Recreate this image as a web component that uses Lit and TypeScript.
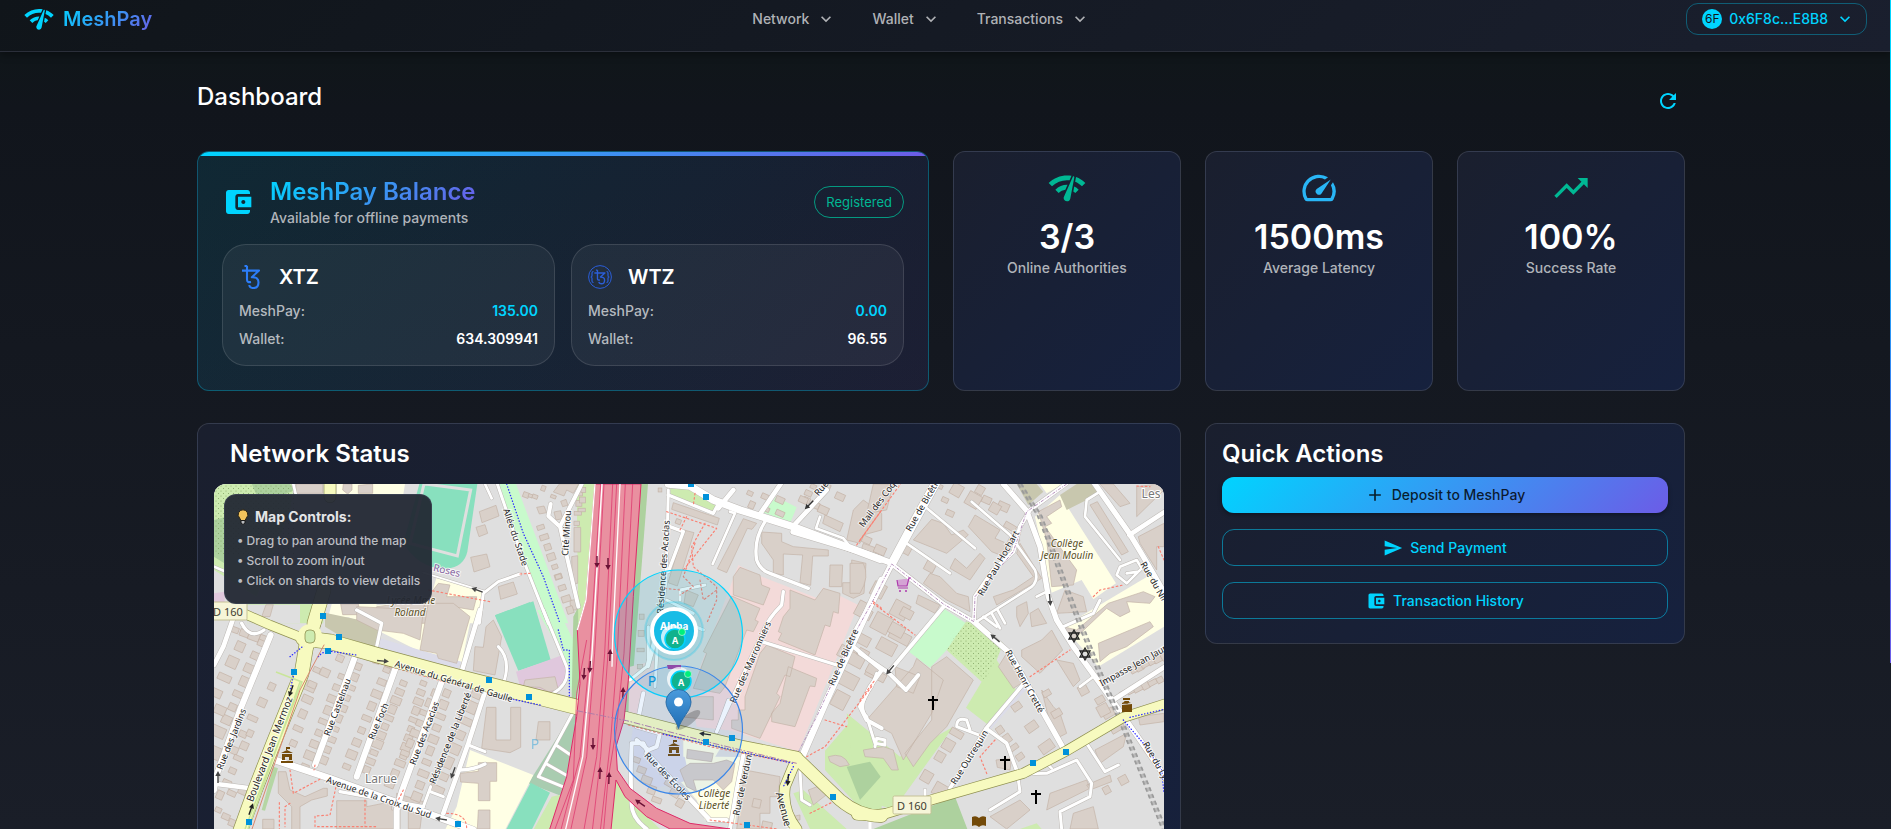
import { LitElement, html, svg, css, nothing } from "lit";
import { customElement } from "lit/decorators.js";

/* ---------- icons (24 x 24 grid) ---------- */

const ICONS = {
  network:
    "M15.9 5c-.17 0-.32.09-.41.23l-.07.15-5.18 11.65c-.16.29-.26.61-.26.96 0 1.11.9 2.01 2.01 2.01.96 0 1.77-.68 1.96-1.59l.01-.03L16.4 5.5c0-.28-.22-.5-.5-.5zM1 9l2 2c2.88-2.88 6.79-4.08 10.53-3.62l1.19-2.68C9.89 3.84 4.74 5.27 1 9zm20 2 2-2c-1.64-1.64-3.55-2.82-5.59-3.57l-.53 2.82c1.5.62 2.9 1.53 4.12 2.75zm-4 4 2-2c-.8-.8-1.7-1.42-2.66-1.89l-.55 2.92c.42.27.83.59 1.21.97zM5 13l2 2c1.13-1.13 2.56-1.79 4.03-2l1.28-2.88c-2.63-.08-5.3.87-7.31 2.88z",
  down: "M7.41 8.59 12 13.17l4.59-4.58L18 10l-6 6-6-6z",
  refresh:
    "M17.65 6.35C16.2 4.9 14.21 4 12 4c-4.42 0-7.99 3.58-7.99 8s3.57 8 7.99 8c3.73 0 6.84-2.55 7.73-6h-2.08c-.82 2.33-3.04 4-5.65 4-3.31 0-6-2.69-6-6s2.69-6 6-6c1.66 0 3.14.69 4.22 1.78L13 11h7V4z",
  wallet:
    "M21 18v1c0 1.1-.9 2-2 2H5c-1.11 0-2-.9-2-2V5c0-1.1.89-2 2-2h14c1.1 0 2 .9 2 2v1h-9c-1.11 0-2 .9-2 2v8c0 1.1.89 2 2 2zm-9-2h10V8H12zm4-2.5c-.83 0-1.5-.67-1.5-1.5s.67-1.5 1.5-1.5 1.5.67 1.5 1.5-.67 1.5-1.5 1.5",
  speed:
    "m20.38 8.57-1.23 1.85a8 8 0 0 1-.22 7.58H5.07A8 8 0 0 1 15.58 6.85l1.85-1.23A10 10 0 0 0 3.35 19a2 2 0 0 0 1.72 1h13.85a2 2 0 0 0 1.74-1 10 10 0 0 0-.27-10.44zm-9.79 6.84a2 2 0 0 0 2.83 0l5.66-8.49-8.49 5.66a2 2 0 0 0 0 2.83",
  trend: "m16 6 2.29 2.29-4.88 4.88-4-4L2 16.59 3.41 18l6-6 4 4 6.3-6.29L22 12V6z",
  add: "M19 13h-6v6h-2v-6H5v-2h6V5h2v6h6z",
  send: "M2.01 21 23 12 2.01 3 2 10l15 2-15 2z",
};

const icon = (name: keyof typeof ICONS, cls = "i20") => html`
  <svg class="icon ${cls}" viewBox="0 0 24 24" aria-hidden="true"><path d=${ICONS[name]}></path></svg>
`;

/* ---------- map data ---------- */

interface Tile {
  x: number;
  y: number;
  areas: [string, string][];
  buildings: string;
  rows?: number[][];
  white?: [number, string][];
  yellow?: [number, string][];
  foot?: string;
  cycle?: string;
}

/* Each tile is drawn at three units per map pixel. */
const TILES: Tile[] = [
  {
    x: 190,
    y: 410,
    areas: [
      ["#cdebb0", "M72 222H312L300 300L200 560L72 480Z"],
      ["#add19e", "M185 222H300L312 240L280 256H200Z"],
      ["#add19e", "M72 330L103 322V460L72 440Z"],
      ["#ffffe5", "M440 222H645L640 253H440Z"],
      ["#e0c8dd", "M72 550L104 545V578H72Z"],
      ["#cdebb0", "M172 582H400V640H172Z"],
      ["#dfdfdf", "M172 584H330V640H172Z"],
      ["#ffffe5", "M425 582H560L550 622H415Z"],
      ["#ffffe5", "M740 500L880 545L870 640H640L720 570Z"],
      ["#88e0be", "M688 222L640 400Q690 480 770 476Q822 470 832 425L862 222Z"],
      ["#c8facc", "M922 222H978L1135 640H1075Z"],
      ["#88e0be", "M915 616L1020 576L1032 640H925Z"],
      ["#cdebb0", "M1196 222L1160 580L1200 640V222Z"],
      ["#add19e", "M1175 520L1200 510V640H1165Z"],
    ],
    buildings:
      "M318 222H398V250H318ZM505 226L548 222V250H505ZM460 222H486V240L473 252L458 240ZM868 305L918 286L927 318L876 338ZM858 352L885 344L893 370L867 380ZM842 442L890 432L900 470L852 486ZM925 530L970 516L982 552L932 568ZM1108 222L1166 222L1150 250L1130 240L1122 258L1090 246ZM1040 292L1062 288L1070 308L1048 312ZM1092 306L1112 302L1118 326L1098 330ZM1112 274L1128 268L1134 286L1118 290ZM1152 352H1172V426H1152ZM1145 440L1163 437V520L1147 522ZM1140 572L1158 568L1160 600H1142ZM452 582L505 582L510 614H458ZM228 584H250L240 620H215ZM560 590L700 572L720 640H540ZM705 572L745 520L780 525L770 560L860 560L850 600L740 582L700 600Z",
    rows: [
      [1008, 255, 1035, 260, 3, 16, 20],
      [1052, 352, 1105, 500, 6, 22, -18],
      [1105, 500, 1140, 600, 4, 22, -18],
      [1170, 250, 1160, 340, 4, 18, 0],
      [1060, 235, 1090, 260, 2, 16, 20],
    ],
    white: [
      [9, "M922 222L1000 450L1075 640"],
      [12, "M1175 222L1110 350L1075 318L1082 282M1110 350L1165 590"],
      [9, "M990 492L925 515L880 550L868 640"],
      [6, "M700 488L885 545"],
      [8, "M72 470L104 484M310 222L318 256"],
      [8, "M885 222L905 265"],
    ],
    yellow: [[34, "M420 222V260"], [40, "M372 640L402 540"]],
    foot: "M990 492L1020 490M715 540L900 575",
    cycle: "M950 222L1000 370L1060 500L1110 640",
  },
  {
    x: 190,
    y: 610,
    areas: [
      ["#ffffe5", "M430 0L620 -20L850 -10L815 160L700 130L560 60Z"],
      ["#dcdce9", "M570 85L690 120L815 155L790 192L555 120Z"],
      ["#c8c7ae", "M405 8L580 45L560 112L455 80L405 50Z"],
      ["#88e0be", "M915 16L1030 -26L1082 150L985 182Z"],
      ["#c8facc", "M1040 0H1105L1150 90V268L1115 130Z"],
      ["#add19e", "M1150 20L1200 -80V60L1160 268H1145Z"],
      ["#e0c8dd", "M978 185L1118 135L1137 190L1100 255L990 228Z"],
      ["#a9ccb0", "M1150 306L1162 318L1120 560L1015 520Z"],
      ["#ffffe5", "M840 420L1030 495L945 660H765L800 590Z"],
      ["#88e0be", "M1022 518L1080 548L1025 660H948Z"],
      ["#cdebb0", "M1085 560L1130 550L1080 660H1030Z"],
      ["#b5d6a4", "M250 470L264 475L225 602L215 600Z"],
    ],
    buildings:
      "M500 -10L700 0L690 90L640 70L560 60L500 30ZM715 -20L790 -20L840 20L800 160L745 145L740 130L690 120ZM888 50L910 30L935 80L915 195L850 182L855 110L880 112ZM1005 210L1095 200L1105 240L1075 245L1050 232L1000 230ZM890 292H918V390H962V292H992V412L960 428L875 415ZM1045 335H1080V390H1038ZM810 490L865 484V458H920V514H900V572H865V520L812 516ZM865 600H900V657H862ZM265 485H288L300 540L345 560L400 535H412V558L365 570L330 590V660H305V590L265 550ZM440 572H530V590L605 575V600H630V657H440ZM218 628H252V657H218ZM620 550L700 575L690 657H655V590L620 580Z",
    rows: [
      [135, 60, 220, 90, 4, 28, 20],
      [150, 110, 80, 250, 4, 34, 24],
      [215, 100, 110, 330, 7, 30, 24],
      [245, 230, 130, 420, 5, 26, 24],
      [90, 300, 78, 430, 3, 44, 24],
      [180, 370, 110, 520, 5, 24, 24],
      [450, 145, 360, 230, 3, 28, 24],
      [380, 180, 310, 400, 6, 26, 24],
      [455, 200, 345, 470, 9, 26, 22],
      [505, 170, 400, 450, 10, 24, 22],
      [590, 180, 470, 470, 9, 26, 22],
      [640, 220, 530, 480, 11, 26, 22],
      [700, 220, 640, 440, 9, 24, 22],
      [735, 250, 600, 520, 10, 26, 22],
      [770, 250, 680, 560, 10, 27, 22],
      [860, 250, 740, 540, 8, 36, 24],
      [90, 555, 160, 545, 3, 26, 24],
      [85, 600, 130, 640, 3, 24, 24],
      [560, 150, 600, 160, 2, 26, 15],
    ],
    white: [
      [18, "M242 75L150 300L78 500L72 540"],
      [14, "M128 30L100 110L72 165"],
      [18, "M495 140L375 465"],
      [18, "M618 170L500 500"],
      [18, "M755 215L635 545L620 600V660"],
      [14, "M885 245L835 400L760 610M870 0L815 185"],
      [14, "M80 522L175 534"],
      [20, "M255 450L420 505L740 620L850 660"],
      [9, "M925 110Q965 150 940 220M1060 0L1130 170Q1140 220 1090 250M720 545L760 560M1148 310L1045 500L1118 530M1098 405L1142 435M1070 462L1128 495M835 405L885 425M700 590L722 530"],
      [10, "M155 40Q180 90 222 60"],
      [10, "M810 480Q850 480 885 462M450 545L700 590M500 0L575 40L560 110"],
    ],
    yellow: [
      [26, "M160 10L240 45L340 85"],
      [44, "M340 85L420 95L560 135L820 205L1165 292"],
      [34, "M385 -10L370 60L345 130"],
      [42, "M350 100L335 190L250 400L195 540L150 665"],
    ],
    foot: "M300 480L310 550L395 505M268 578V660M440 520L420 615L375 618V650H560M300 580L285 590V650M500 140L620 175L760 215L1160 305M640 540L620 580M375 465L372 480M770 610Q830 610 830 655M525 570V650",
    cycle: "M300 140L350 100M310 200L300 240M385 140Q400 120 430 125L500 135M970 268L1050 285M1105 60L1120 120H1138V260",
  },
  {
    x: 580,
    y: 480,
    areas: [
      ["#cdebb0", "M-10 12H48L20 360L-5 440Z"],
      ["#add19e", "M182 12H204L150 705H128Z"],
      ["#cdebb0", "M270 12H330L400 60L420 62L405 95L272 45Z"],
      ["#c8facc", "M588 50L650 82L632 125L550 98Z"],
      ["#f3dad9", "M475 255L545 290L720 358L728 322L835 375L655 815L455 752L350 740L330 640Z"],
      ["#f3dad9", "M150 560L230 540L170 705H145Z"],
      ["#ffffe5", "M310 830L430 830L492 832L465 1030L375 1020L350 960L280 880Z"],
      ["#dcdce9", "M160 740L300 770L330 900L200 930L150 800Z"],
      ["#cdebb0", "M735 812L810 725L905 790V1010L840 985L735 870Z"],
      ["#add19e", "M818 865L862 845L905 858V960L850 930Z"],
      ["#cdebb0", "M100 890L150 960L240 1047H90Z"],
      ["#cdebb0", "M640 940L670 930L800 1047H690Z"],
      ["#ffffe5", "M310 760L430 790L400 840L310 830Z"],
    ],
    buildings:
      "M280 68L418 115L412 135L275 88ZM312 150L342 158L292 318L264 308ZM490 116L530 130L516 148L502 145L440 278L412 266ZM545 156L605 160V185L640 200L745 210V228L698 228L692 316L660 308L668 225L610 222V285L580 280V240L545 190ZM750 255H788L785 320H748ZM815 240L858 250L852 340L820 355L788 340V308H815ZM480 262L540 285L545 315L570 325L550 375L460 345V290ZM455 348L540 385L525 420L535 425L520 455L500 450L435 620L420 640L340 625L380 520L370 515ZM630 330L705 360L730 325L780 340L775 400L760 395L750 440L735 435L705 525L595 480L605 460L595 455L610 410L630 385ZM560 495L645 530L630 590L615 585L590 640L600 650L540 775L455 745V720H475V690H495V650L540 520ZM625 560L710 595L705 620L690 618L645 740L575 725V700L600 670ZM330 650H400V720L300 710ZM318 330L355 345L340 380L312 370ZM322 808L400 820L395 845L320 835ZM300 870L330 850L400 850L440 840L465 850L455 905L430 930L400 900L340 900L350 935L320 920ZM495 870L600 890L595 950H570V1000H540V1047H470ZM685 930L725 915L745 940L700 975ZM745 830Q790 815 808 855L780 860L750 845ZM735 105L790 130L780 155L728 130ZM800 180L820 90L850 60L905 100V150L850 165L840 190ZM850 190L905 210V235L845 205ZM635 1010L660 1005V1020H635Z",
    rows: [
      [10, 30, 5, 90, 3, 18, 0],
      [240, 30, 241, 32, 1, 14, 0],
      [295, 125, 296, 126, 1, 20, 20],
      [510, 40, 600, 60, 3, 22, 24],
      [515, 75, 600, 100, 3, 22, 24],
      [680, 60, 730, 90, 3, 26, 24],
      [740, 20, 780, 50, 2, 28, 24],
      [700, 20, 670, 60, 3, 22, 24],
      [855, 400, 800, 520, 2, 50, 28],
      [850, 480, 780, 660, 4, 50, 28],
      [870, 580, 900, 590, 2, 34, 28],
      [185, 410, 180, 560, 4, 18, 0],
      [170, 840, 230, 960, 5, 26, 20],
      [250, 880, 300, 970, 4, 24, 30],
      [530, 970, 560, 1040, 2, 30, 12],
    ],
    white: [
      [22, "M265 12L330 18L400 60L480 90L640 140L900 238"],
      [9, "M265 30L262 150L258 300L245 400L200 560L150 600"],
      [14, "M602 12L540 102M740 30L640 138M460 30L415 85"],
      [10, "M555 125Q520 180 530 240Q540 270 570 280L685 325"],
      [10, "M610 335L605 375Q560 420 545 465L410 755"],
      [10, "M545 485L770 555M265 45L400 100L420 62M270 140L310 155L265 275"],
      [20, "M905 300L740 660L660 845"],
      [8, "M450 95L465 100L398 252M720 110L708 145L790 175L810 200"],
      [9, "M300 360V330L375 315M260 360L340 400M205 440V560L250 400L370 450M235 440L225 620M410 755L445 660"],
      [12, "M155 790Q150 900 155 960Q150 1010 200 1047M155 790L190 790L220 850M190 640L170 740L240 760L230 800L205 810L170 780"],
      [14, "M200 820L385 1015"],
      [12, "M490 825L470 930L450 1047M385 1020H440"],
      [12, "M820 500L905 570L870 620L840 680L860 720L905 745"],
      [9, "M660 870L665 960L690 975M870 1020V1047"],
    ],
    yellow: [
      [34, "M135 712L330 762L480 798L650 832"],
      [36, "M650 835L780 960Q840 1010 905 1008"],
      [30, "M648 840L615 920Q605 990 650 1047"],
    ],
    foot: "M260 95L410 145L310 270M320 110L300 150M375 130L335 200L340 260L410 320V360L380 430M345 190L310 290L340 320L300 345M255 325L300 330M360 300L370 360L410 330M345 40L340 75M875 620L735 800L680 830M735 720L800 740M145 735L390 800L640 850M390 1020L590 1047M690 1000L770 960M830 195L905 90M880 365L905 385",
    cycle: "M250 762L450 808L640 850M640 860L610 920",
  },
  {
    x: 860,
    y: 480,
    areas: [
      ["#c8facc", "M250 385L318 430L260 510L210 563L147 515Z"],
      ["#cdebb0", "M318 425L345 425L430 490L410 540L468 630L385 735L318 683L365 605L260 510Z"],
      ["#ffffe5", "M525 110L600 45L768 310L700 358L665 300L575 338Z"],
      ["#ffffe5", "M610 440L870 285L912 350V440L715 560Z"],
      ["#ffffe5", "M540 12H610L560 40Z"],
      ["#c8c7ae", "M600 45L650 12H700L720 40L620 90Z"],
      ["#c8c7ae", "M470 12H530L550 35L505 75Z"],
      ["#cdebb0", "M-40 700L120 830L280 740L100 990L-10 950Z"],
      ["#add19e", "M-40 860L30 845L62 890L0 960Z"],
      ["#add19e", "M40 1047L160 1000L285 950L322 1047Z"],
      ["#dcdce9", "M480 615H510L390 750L375 740Z"],
      ["#cdebb0", "M480 1047L530 1030L545 1047Z"],
    ],
    buildings:
      "M215 118L250 130L275 165L310 150L325 165L260 220L160 180ZM345 105L420 150L405 175L440 190L455 160L480 180L445 235L395 215L325 140ZM360 220L375 235L330 300L270 265L285 235L320 265ZM210 280L240 290L290 340L325 350L330 395L260 360L190 310ZM175 345L240 375L225 400L168 370ZM400 350L460 330L520 290L470 220L480 190L545 295L520 310L410 375ZM535 95L600 60L605 80L560 110L575 130L555 140L650 270L640 315L575 320L560 180ZM615 330L670 350L680 395L590 400ZM690 75L712 65L805 215L785 225ZM830 20L912 10V30L830 110ZM835 170L912 130V200H890V270L840 190ZM720 12H760L810 70L780 80ZM610 440L650 450L745 370L850 335L885 350L870 370L800 365L810 395L780 410L740 385L640 480ZM715 490L870 425L880 440L800 500L750 520L720 545ZM485 510L545 480L575 450L608 510L540 580L485 530ZM470 380L500 365L505 400L480 440L470 410ZM510 400L535 385L560 430L515 440ZM415 560L440 520L500 600L460 625ZM590 540L640 550L660 600L640 620ZM170 535L250 600L215 700L130 840L95 760L20 720L90 640L160 560ZM215 560L260 530L340 600L260 740L210 790L160 860L135 820L215 720ZM105 560L180 590L160 640L110 620ZM10 810L70 800L100 810L115 870L95 870L70 835L15 830ZM408 840L455 835L450 870L412 862ZM545 630L580 680L600 700L620 760L600 770L570 730ZM705 810L800 760L790 800L720 850ZM835 710L912 700V725L840 735ZM390 1010L480 960L510 990L440 1047ZM570 940L680 900L690 925L560 990ZM640 1000L700 980L715 1047H630ZM680 915L750 885L755 905L690 930ZM-30 250H10Q30 290 0 340H-30ZM40 12H100L80 90L20 100Z",
    rows: [
      [20, 180, 60, 210, 2, 34, 24],
      [55, 330, 120, 390, 2, 50, 28],
      [10, 390, 120, 470, 3, 54, 28],
      [140, 400, 80, 500, 3, 46, 28],
      [10, 520, 40, 570, 2, 40, 28],
      [290, 30, 340, 60, 2, 42, 30],
      [380, 60, 430, 80, 2, 34, 24],
      [240, 20, 270, 100, 3, 20, 24],
      [360, 30, 450, 140, 3, 30, 30],
      [140, 210, 210, 260, 2, 30, 28],
      [720, 660, 770, 740, 3, 34, -30],
      [820, 570, 912, 530, 6, 22, -28],
      [790, 640, 900, 600, 6, 24, -28],
      [670, 630, 730, 690, 2, 34, -28],
      [240, 830, 290, 760, 3, 34, 30],
      [200, 890, 240, 930, 2, 40, 30],
      [470, 680, 560, 800, 3, 36, -35],
      [420, 750, 480, 830, 4, 26, -35],
      [560, 640, 590, 700, 2, 30, -30],
      [740, 930, 790, 900, 2, 26, -28],
    ],
    white: [
      [18, "M-200 155L0 215L92 248"],
      [26, "M232 0L160 130L95 252"],
      [18, "M95 252L40 360L-10 450"],
      [14, "M95 252L250 372L342 425"],
      [12, "M342 425L345 350L400 270L460 215L480 140L510 90L620 10"],
      [16, "M430 12L500 92L540 200L565 350L590 420L640 500L770 680L840 780L915 890"],
      [16, "M342 425L450 520L500 610L612 808"],
      [12, "M255 375L85 578L0 520M85 578L138 630L175 585"],
      [16, "M700 5L808 160L850 230L920 350"],
      [14, "M808 165L915 95M760 660L915 560"],
      [8, "M195 80L345 205M335 65L450 165L525 270Q540 310 500 330L350 425M140 190L270 280M370 410L410 440M395 400L420 445M412 388L435 430M720 35L680 60L675 110L780 240M780 260L830 240L845 265L800 310L770 285ZM800 280L835 275M530 350L560 335M660 620L700 590M560 850L575 865"],
      [9, "M50 580L35 620Q-10 680 20 710L45 790L75 795L75 780L50 775L45 800M370 770L290 740Q290 710 320 720L330 750M475 900Q480 880 560 880L650 840L695 910L690 950L600 995L605 1047M680 790L735 875L775 855M475 900L480 935L390 990M610 440L700 400L720 360"],
      [11, "M490 612L378 745L270 925M378 745L440 790L475 885"],
      [9, "M30 1010V1047M195 930V945"],
    ],
    yellow: [[28, "M-10 1005Q30 1010 80 1000L230 955L490 880L620 812L790 712L915 672"]],
    foot: "M40 370L165 465M0 660L45 600M0 180L130 0M510 590L630 510M405 780L360 830L382 885M700 350L720 330L790 315M895 200L912 240M830 18L870 20",
    cycle: "M810 712L912 688M790 720L850 790L905 870L912 940",
  },
];

/* Rows of small houses: x1, y1, x2, y2, count, size, rotation. */
const houseRow = ([x1, y1, x2, y2, n, size, angle]: number[]) =>
  Array.from({ length: n }, (_, i) => {
    const t = n > 1 ? i / (n - 1) : 0;
    const x = x1 + (x2 - x1) * t;
    const y = y1 + (y2 - y1) * t;
    const w = size * (0.8 + ((i * 7 + x1) % 5) / 10);
    const h = size * (0.6 + ((i * 5 + y1) % 4) / 8);
    return svg`<rect x=${x - w / 2} y=${y - h / 2} width=${w} height=${h} transform="rotate(${angle} ${x} ${y})"></rect>`;
  });

const layer = (draw: (t: Tile) => unknown) =>
  TILES.map((t) => svg`<g transform="translate(${t.x} ${t.y}) scale(0.33333)">${draw(t)}</g>`);

type Label = [string, number, number, number, number, string?];

/* text, centre x, centre y, rotation, size, style */
const LABELS: Label[] = [
  ["Allée du Stade", 516, 537, 71, 9],
  ["Cité Minou", 566, 533, -86, 9],
  ["Roses", 447, 570, 13, 10, "purple"],
  ["Lycée Mme", 411, 600, 0, 10, "school"],
  ["Roland", 410, 612, 0, 10, "school"],
  ["Avenue du Général de Gaulle", 454, 681, 17, 9],
  ["Rue Castelnau", 337, 707, -69, 9],
  ["Rue Foch", 378, 721, -67, 9],
  ["Rue des Acacias", 424, 733, -69, 9],
  ["Résidence de la Liberté", 450, 738, -68, 9],
  ["Rue des Jardins", 231, 739, -68, 9],
  ["Boulevard Jean Mermoz", 269, 749, -69, 10],
  ["Avenue de la Croix du Sud", 379, 797, 19, 9],
  ["Larue", 381, 778, 0, 12, "place"],
  ["Résidence des Acacias", 663, 567, -86, 9],
  ["Rue des Marronniers", 750, 662, -66, 9],
  ["Rue de Bicêtre", 843, 657, -66, 9],
  ["Rue des Écoles", 668, 776, 46, 9],
  ["Collège", 714, 793, 0, 10, "school"],
  ["Liberté", 714, 805, 0, 10, "school"],
  ["Rue de Verdun", 742, 785, -78, 9],
  ["Avenue de", 786, 816, 75, 10],
  ["Rue", 821, 488, -50, 9],
  ["Mail des Coq", 877, 504, -53, 9],
  ["Rue de Bicêtre", 923, 504, -60, 9],
  ["Rue Paul Hochart", 998, 563, -60, 9],
  ["Collège", 1067, 543, 0, 10, "school"],
  ["Jean Moulin", 1067, 555, 0, 10, "school"],
  ["Rue du Nil", 1154, 581, 60, 9],
  ["Rue Henri Cretté", 1025, 681, 61, 9],
  ["Impasse Jean Jaurès", 1137, 663, -29, 9],
  ["Rue Outrequin", 969, 757, -58, 9],
  ["Rue du Lys", 1157, 762, 60, 9],
  ["Les", 1151, 493, 0, 12, "place"],
];

const STOPS = [
  [323, 616], [339, 637], [328, 651], [294, 672], [489, 680], [529, 697], [249, 822], [458, 824],
  [706, 497], [691, 484], [732, 738], [706, 742], [833, 797], [747, 825], [1033, 763], [1066, 752],
];

/* one-way arrows: x, y, rotation (0 points right), colour */
const ARROWS: [number, number, number, string][] = [
  [477, 590, 200, "#444"], [383, 661, 5, "#444"], [291, 691, 110, "#222"], [251, 809, -70, "#222"],
  [218, 777, -90, "#444"], [453, 773, 110, "#444"], [441, 819, 190, "#444"],
  [597, 562, 90, "#6a1135"], [608, 564, 90, "#6a1135"], [610, 655, -88, "#6a1135"], [590, 667, 94, "#6a1135"],
  [584, 674, 94, "#6a1135"], [623, 693, -88, "#6a1135"], [593, 744, 90, "#6a1135"], [600, 773, -88, "#6a1135"],
  [609, 778, -88, "#6a1135"], [640, 803, 215, "#6a1135"], [705, 734, 188, "#222"], [788, 780, 95, "#222"],
  [809, 505, 135, "#333"], [1050, 600, 85, "#444"], [995, 638, 220, "#444"], [890, 670, 130, "#444"],
];

const CROSSES = [[933, 703], [1005, 763], [1036, 797]];
const STARS = [[1074, 636], [1085, 654]];

const star = (x: number, y: number) => svg`
  <path class="sign" d="M${x} ${y - 6}L${x + 5} ${y + 3}H${x - 5}ZM${x} ${y + 6}L${x + 5} ${y - 3}H${x - 5}Z"></path>`;

const townhall = (x: number, y: number) => svg`
  <path fill="#734a08" d="M${x - 6} ${y + 7}v-2h12v2zM${x - 5} ${y + 4}v-6h10v6h-3v-3h-4v3zM${x - 6} ${y - 3}l6-3 6 3zM${x - 1} ${y - 6}v-3h4v2h-3v1z"></path>`;

const shield = (x: number, y: number, w: number) => svg`
  <rect x=${x - w / 2} y=${y - 9} width=${w} height="18" rx="1.5" fill="#f6f5d8" stroke="#c5c196"></rect>
  <text class="label ref" x=${x} y=${y}>D 160</text>`;

const agent = (x: number, y: number) => svg`
  <circle cx=${x - 2} cy=${y - 2} r="12" fill="#fff" opacity=".75"></circle>
  <circle cx=${x} cy=${y} r="10" fill="#10b28d" stroke="#00d4ff" stroke-width="1.5"></circle>
  <text class="marker" x=${x} y=${y + 1}>A</text>
  <circle cx=${x + 7} cy=${y - 7} r="3.5" fill="#00f07c" stroke="#bff8e0" stroke-width=".7"></circle>`;

const MOTORWAY =
  "M45 12H183L160 350L145 600L132 720L108 800L112 870L150 925L230 985L330 1030L450 1047H270L200 1010L135 950L108 900L92 1060H-95L-40 890L-10 710L0 610L-8 450L18 360Z";

const mapDrawing = () => svg`
  <rect x="214" y="484" width="950" height="400" fill="#dfdfdf"></rect>
  ${layer((t) => t.areas.map(([fill, d]) => svg`<path fill=${fill} d=${d}></path>`))}
  <rect x="214" y="484" width="80" height="70" fill="url(#dots)"></rect>
  <path d="M966 621L1003 644L985 680L947 648Z" fill="url(#dots)"></path>
  <g transform="translate(190 410) scale(0.33333)" fill="none">
    <path stroke="#dfdfdf" stroke-width="9" d="M702 222L660 400L802 438L842 240L706 222"></path>
  </g>
  ${layer(
    (t) => svg`<g fill="#d9d0c9" stroke="#c3b2a6" stroke-width="2">
      <path d=${t.buildings}></path>${(t.rows ?? []).map(houseRow)}</g>`,
  )}
  ${layer((t) => (t.white ?? []).map(([w, d]) => svg`<path class="line" stroke="#bdb9b5" stroke-width=${w + 3} d=${d}></path>`))}
  ${layer((t) => (t.white ?? []).map(([w, d]) => svg`<path class="line" stroke="#fff" stroke-width=${w} d=${d}></path>`))}
  ${layer((t) => (t.foot ? svg`<path class="line" stroke="#fa8072" stroke-width="3.5" stroke-dasharray="5 8" d=${t.foot}></path>` : nothing))}
  <g transform="translate(860 480) scale(0.33333)" fill="none">
    <path stroke="#9b9b9b" stroke-width="5" stroke-dasharray="12 10" d="M484 12L546 110L646 380L726 580L796 740L918 1047M474 12L534 110L634 380L714 580L784 740L906 1047"></path>
    <path stroke="#9b9b9b" stroke-width="15" stroke-dasharray="12 10" opacity=".55" d="M479 12L540 110L640 380L720 580L790 740L912 1047"></path>
    <path stroke="#b692bd" stroke-width="3" stroke-dasharray="10 4 3 4" d="M620 12L500 95L460 215L345 350L342 425L250 372L95 252L40 360L-10 450L-130 710L-200 845"></path>
  </g>
  ${layer((t) => (t.yellow ?? []).map(([w, d]) => svg`<path class="line" stroke="#8f9050" stroke-width=${w + 4} d=${d}></path>`))}
  ${layer((t) => (t.yellow ?? []).map(([w, d]) => svg`<path class="line" stroke="#f7fabf" stroke-width=${w} d=${d}></path>`))}
  ${layer((t) => (t.cycle ? svg`<path class="line" stroke="#2b2bff" stroke-width="4" stroke-dasharray="1 8" d=${t.cycle}></path>` : nothing))}
  <circle cx="310" cy="636" r="12" fill="#f7fabf"></circle>
  <rect x="305" y="630" width="10" height="13" rx="4" fill="#cdebb0" stroke="#8f9050" stroke-width=".8"></rect>
  <path d="M276 672L302 682L245 829M300 682L248 829" fill="none" stroke="#c9e59a" stroke-width="1.5"></path>
  <path class="line" stroke="#d9876f" stroke-width="1" d="M324 645L300 690L252 829"></path>
  <g transform="translate(580 480) scale(0.33333)">
    <path fill="#e990a0" stroke="#dc2a67" stroke-width="3" d=${MOTORWAY}></path>
    <g fill="none" stroke="#dc2a67" stroke-width="2">
      <path d="M62 12L30 520L0 830L-60 1060M72 12L44 520L20 830L-30 1060M98 12L74 520L50 830L10 1060M110 12L84 520L62 830L36 1060M136 12L112 520L92 780L60 1060M158 12L132 520L110 740L84 900L70 1060M20 480L-10 640L-20 900L-75 1047"></path>
      <path stroke="#fff" stroke-width="4" d="M66 12L36 520L8 830L-46 1060M120 12L98 480L96 560"></path>
      <path stroke="#fff" stroke-width="4" d="M45 12L18 360L-8 450"></path>
    </g>
    <path fill="none" stroke="#b07aa8" stroke-width="3" stroke-dasharray="20 5 5 5" d="M-10 692L140 722L400 790L650 850"></path>
  </g>
  <g fill="#0092da">${STOPS.map(([x, y]) => svg`<rect x=${x - 3} y=${y - 3} width="6" height="6"></rect>`)}</g>
  ${ARROWS.map(
    ([x, y, a, c]) => svg`<path transform="translate(${x} ${y}) rotate(${a})" fill=${c} d="M-6-.7H1V-2.7L6 0L1 2.7V.7H-6Z"></path>`,
  )}
  ${shield(228, 611, 38)} ${shield(912, 805, 38)}
  ${LABELS.map(
    ([t, x, y, a, size, kind]) =>
      svg`<text class="label s${size} ${kind ?? "road"}" x=${x} y=${y} transform="rotate(${a} ${x} ${y})">${t}</text>`,
  )}
  <text class="label parking" x="652" y="680">P</text>
  <text class="label parking faint" x="535" y="743">P</text>
  ${CROSSES.map(([x, y]) => svg`<path d="M${x} ${y - 7}V${y + 7}M${x - 5} ${y - 3}H${x + 5}" stroke="#000" stroke-width="2" fill="none"></path>`)}
  ${STARS.map(([x, y]) => star(x, y))}
  ${townhall(287, 756)} ${townhall(674, 749)}
  <g fill="#734a08">
    <path d="M1122 705l10-1v8h-10zM1122 703q4-3 9 0l-9 1zM1123 698h7v2h-7zM1124 701h5q0 3-2 3t-3-3z"></path>
    <path d="M972 817q4-2 7 1q3-3 7-1v9q-4-2-7 1q-3-3-7-1z"></path>
  </g>
  <path d="M897 580l1 6h9l2-8h2M898 588h10" fill="#d4a3d4" stroke="#ac39ac" stroke-width="1.2"></path>
  <circle cx="900" cy="591" r="1" fill="#ac39ac"></circle><circle cx="906" cy="591" r="1" fill="#ac39ac"></circle>

  <circle cx="678.5" cy="634" r="64" fill="#00a0c8" fill-opacity=".14" stroke="#00d4ff" stroke-width="1.2"></circle>
  <circle cx="678.5" cy="730" r="64" fill="#3a86e8" fill-opacity=".1" stroke="#3a86e8" stroke-width="1.2"></circle>
  <circle cx="674" cy="631" r="29" fill="#00b8e0" fill-opacity=".12" stroke="#00c8ee" stroke-opacity=".25" stroke-width="2"></circle>
  <circle cx="674" cy="631" r="22" fill="#17bce6" stroke="#fff" stroke-width="4"></circle>
  <path d="M667 665h14v4h-13z" fill="#8f4aa8"></path>
  <text class="marker big" x="674" y="626">Alpha</text>
  ${agent(675, 639)} ${agent(681, 681)}
  <ellipse cx="688" cy="720" rx="15" ry="5" transform="rotate(-38 688 720)" fill="#000" opacity=".22"></ellipse>
  <path d="M678.500 728.500C676 718 666 711 666 702A12.500 12.500 0 0 1 691 702C691 711 681 718 678.500 728.500Z" fill="url(#pin)" stroke="#2b6da8"></path>
  <circle cx="678.500" cy="702" r="4.500" fill="#fff"></circle>
`;

/* ---------- page data ---------- */

const NAV = ["Network", "Wallet", "Transactions"];
const TEZ = "M8 .8V14.500Q8 17.800 12 17M3 5.600H20L12.800 12.200Q19.500 12 19.500 17.200Q19.500 23 14.500 23Q10.500 23 10.300 20M8 1L5.500 1";
const TOKENS = [
  { symbol: "XTZ", mesh: "135.00", wallet: "634.309941" },
  { symbol: "WTZ", mesh: "0.00", wallet: "96.55" },
];
const STATS: { name: keyof typeof ICONS; tone: string; value: string; label: string }[] = [
  { name: "network", tone: "green", value: "3/3", label: "Online Authorities" },
  { name: "speed", tone: "blue", value: "1500ms", label: "Average Latency" },
  { name: "trend", tone: "green", value: "100%", label: "Success Rate" },
];

const tokenIcon = (symbol: string) =>
  symbol === "XTZ"
    ? html`<svg class="i24 tez" viewBox="0 0 24 24" aria-hidden="true"><path d=${TEZ} stroke-width="2.1"></path></svg>`
    : html`<svg class="i24 tez wtz" viewBox="0 0 24 24" aria-hidden="true">
        <circle cx="12" cy="12" r="11.400" stroke-width="1"></circle>
        <path d=${TEZ} stroke-width="2.2" transform="translate(4.500 4.500) scale(.62)"></path>
        <path stroke-width="1.2" d="M5.500 6.500Q4 6.500 4 8V10.500Q4 12 3 12Q4 12 4 13.500V16Q4 17.500 5.500 17.500M18.500 6.500Q20 6.500 20 8V10.500Q20 12 21 12Q20 12 20 13.500V16Q20 17.500 18.500 17.500"></path>
      </svg>`;

@customElement("app-root")
export class AppRoot extends LitElement {
  static styles = css`
    :host {
      display: block;
      position: relative;
      height: 100vh;
      overflow: hidden;
      background: linear-gradient(180deg, #10161a 0, #10161a 7%, #11151c 13%, #1a1e28 100%);
      color: #fff;
      font: 500 14px/20px Inter, "Liberation Sans", sans-serif;
    }
    * { box-sizing: border-box; }
    button { font: inherit; color: inherit; background: none; border: 0; margin: 0; padding: 0; cursor: pointer; }
    h1, h2, h3, p, dl, dd, ul { margin: 0; padding: 0; }
    .icon { fill: currentColor; flex: none; display: block; }
    .i20 { width: 20px; height: 20px; }
    .i24 { width: 24px; height: 24px; }
    .i32 { width: 32px; height: 32px; }
    .i40 { width: 40px; height: 40px; }

    .bar {
      position: relative;
      display: flex;
      align-items: center;
      justify-content: space-between;
      padding: 3px 24px 16px 23px;
      border-bottom: 1px solid #2b2f3a;
      background: linear-gradient(135deg, #10151a, #1a1f2e);
      box-shadow: 0 2px 8px rgba(0, 0, 0, 0.4);
    }
    .brand { display: flex; align-items: center; gap: 8px; color: #00d4ff; text-decoration: none; font-size: 20px; font-weight: 600; line-height: 32px; }
    .grad {
      background: linear-gradient(135deg, #00d4ff, #6c5ce7);
      -webkit-background-clip: text;
      background-clip: text;
      color: transparent;
    }
    .nav { display: flex; gap: 36px; padding-left: 4px; color: #b0b2b6; }
    .nav button { display: flex; align-items: center; gap: 7px; }
    .account {
      display: flex; align-items: center; gap: 7px; height: 32px;
      padding: 0 11px 0 15px; border: 1px solid rgba(0, 212, 255, 0.35); border-radius: 12px; color: #00d4ff;
    }
    .avatar {
      width: 20px; height: 20px; border-radius: 50%; background: #00d4ff; color: #10151a;
      font-size: 12px; text-align: center; font-weight: 400;
    }

    .page { max-width: 1536px; margin: 0 auto; padding: 29px 24px; }
    .scroller { padding-right: 9px; }
    .title-row { display: flex; justify-content: space-between; align-items: flex-start; padding-bottom: 33px; }
    h1 { font-size: 24px; line-height: 32px; font-weight: 500; }
    .refresh { padding: 5px; color: #00d4ff; margin-top: 3px; }
    .grid { display: grid; grid-template-columns: repeat(12, minmax(0, 1fr)); gap: 32px 24px; align-items: start; }
    .card {
      position: relative; overflow: hidden;
      border: 1px solid rgba(255, 255, 255, 0.12); border-radius: 12px; padding: 16px;
      background: linear-gradient(135deg, #1a1f2e, #16213e);
    }
    .balance {
      grid-column: span 6; padding: 24px; border-color: rgba(0, 212, 255, 0.3);
      background: linear-gradient(135deg, rgba(0, 212, 255, 0.1), rgba(108, 92, 231, 0.1));
    }
    .balance::before {
      content: ""; position: absolute; inset: 0 0 auto; height: 4px;
      background: linear-gradient(90deg, #00d4ff, #6c5ce7);
    }
    .balance-head { display: flex; align-items: center; gap: 16px; margin-bottom: 16px; color: #00d4ff; }
    .balance-head .names { flex: 1; }
    h2 { font-size: 24px; line-height: 28px; font-weight: 600; }
    .names h2 { line-height: 32px; width: fit-content; }
    .muted { color: #b0b4ba; font-weight: 500; }
    .chip {
      border: 1px solid rgba(0, 184, 148, 0.8); color: #00b894; border-radius: 16px;
      font-size: 13px; font-weight: 400; line-height: 30px; padding: 0 11px;
    }
    .tokens { display: grid; grid-template-columns: 1fr 1fr; gap: 16px; }
    .token { border: 1px solid rgba(255, 255, 255, 0.12); background: rgba(255, 255, 255, 0.05); border-radius: 24px; padding: 16px; }
    .token header { display: flex; align-items: center; gap: 16px; height: 32px; margin-bottom: 8px; }
    h3 { font-size: 20px; line-height: 32px; font-weight: 600; }
    .tez { fill: none; stroke: #2c7df7; stroke-linejoin: round; }
    .wtz { stroke: #2b5ed8; }
    .token dl { display: grid; gap: 8px; }
    .token dl div { display: flex; justify-content: space-between; }
    .token dt { color: #b5babf; }
    .token dd { font-weight: 600; }
    .token .mesh { color: #00d4ff; }

    .stat { grid-column: span 2; align-self: stretch; display: flex; flex-direction: column; align-items: center; }
    .stat strong { font-size: 34px; line-height: 42px; font-weight: 600; margin-top: 8px; }
    .green { color: #00b894; }
    .blue { color: #29b6f6; }

    .network { grid-column: span 8; }
    .network h2 { padding: 0 16px; margin-bottom: 16px; }
    .map { position: relative; height: 600px; border-radius: 12px; overflow: hidden; background: #dfdfdf; color: #333; }
    .map svg.world { display: block; width: 100%; }
    .hint {
      position: absolute; top: 10px; left: 10px; border: 1px solid rgba(60, 68, 84, 0.8); border-radius: 12px;
      padding: 12px 11px 12px 12px; background: rgba(33, 38, 50, 0.94); color: #e4e5e7; font-size: 12px;
    }
    .hint p { display: flex; align-items: center; gap: 6px; font-size: 14px; font-weight: 700; line-height: 20px; padding-bottom: 4px; }
    .hint li { list-style: none; color: #bcbec3; }
    .bulb { width: 12px; height: 16px; }

    .quick { grid-column: span 4; padding-bottom: 24px; display: grid; gap: 16px; }
    .quick h2 { margin-bottom: -7px; }
    .action {
      display: flex; align-items: center; justify-content: center; gap: 7px; min-height: 37px;
      border: 1px solid rgba(0, 212, 255, 0.5); border-radius: 12px; color: #00d4ff;
    }
    .action.primary {
      min-height: 36px; border: 0; color: rgba(0, 0, 0, 0.82); background: linear-gradient(135deg, #00d4ff, #6c5ce7);
      box-shadow: 0 2px 4px rgba(0, 0, 0, 0.35);
    }
    .thumb {
      position: absolute; top: 0; right: 0; width: 1px; height: 80%;
      background: linear-gradient(180deg, #00d4ff 20%, #3a7ff0 60%, #6c5ce7);
    }

    .line { fill: none; stroke-linecap: round; stroke-linejoin: round; }
    .label {
      font-family: "Noto Sans", "Open Sans", sans-serif; font-weight: 400; text-anchor: middle;
      dominant-baseline: central; fill: #222; paint-order: stroke; stroke: rgba(255, 255, 255, 0.7); stroke-width: 2px;
    }
    .s9 { font-size: 9px; }
    .s10 { font-size: 10px; }
    .s12 { font-size: 12px; }
    .school { fill: #5c5226; font-style: italic; }
    .purple { fill: #8461a0; }
    .place { fill: #777; stroke: #fff; }
    .ref { font-size: 11px; fill: #3f4030; stroke: none; }
    .parking { font-size: 14px; fill: #0092da; stroke: none; }
    .faint { opacity: 0.4; }
    .sign { fill: none; stroke: #222; stroke-width: 1.3; }
    .marker { font-size: 9px; font-weight: 700; fill: #fff; text-anchor: middle; dominant-baseline: central; font-family: Inter, sans-serif; }
    .big { font-size: 10px; }
  `;

  render() {
    return html`
      <header class="bar">
        <a class="brand" href="#">${icon("network", "i32")}<span class="grad">MeshPay</span></a>
        <nav class="nav">${NAV.map((n) => html`<button type="button">${n}${icon("down")}</button>`)}</nav>
        <button class="account" type="button"><span class="avatar">6F</span>0x6F8c...E8B8${icon("down")}</button>
      </header>
      <div class="scroller">
        <main class="page">
          <div class="title-row">
            <h1>Dashboard</h1>
            <button class="refresh" type="button" aria-label="Refresh">${icon("refresh", "i24")}</button>
          </div>
          <div class="grid">
            <section class="card balance">
              <div class="balance-head">
                ${icon("wallet", "i32")}
                <div class="names">
                  <h2 class="grad">MeshPay Balance</h2>
                  <p class="muted">Available for offline payments</p>
                </div>
                <span class="chip">Registered</span>
              </div>
              <div class="tokens">
                ${TOKENS.map(
                  (t) => html`<article class="token">
                    <header>${tokenIcon(t.symbol)}<h3>${t.symbol}</h3></header>
                    <dl>
                      <div><dt>MeshPay:</dt><dd class="mesh">${t.mesh}</dd></div>
                      <div><dt>Wallet:</dt><dd>${t.wallet}</dd></div>
                    </dl>
                  </article>`,
                )}
              </div>
            </section>
            ${STATS.map(
              (s) => html`<section class="card stat">
                <span class=${s.tone}>${icon(s.name, "i40")}</span>
                <strong>${s.value}</strong>
                <p class="muted">${s.label}</p>
              </section>`,
            )}
            <section class="card network">
              <h2>Network Status</h2>
              <div class="map">
                <svg class="world" viewBox="214 484 950 400" role="img" aria-label="Map of network shards">
                  <defs>
                    <linearGradient id="pin" x1="0" y1="0" x2="0" y2="1">
                      <stop offset="0" stop-color="#4a9bdc"></stop><stop offset="1" stop-color="#1f6db5"></stop>
                    </linearGradient>
                    <pattern id="dots" width="5" height="5" patternUnits="userSpaceOnUse">
                      <circle cx="1" cy="1" r=".5" fill="#7da05f"></circle><circle cx="3.500" cy="3.500" r=".5" fill="#7da05f"></circle>
                    </pattern>
                  </defs>
                  ${mapDrawing()}
                </svg>
                <div class="hint">
                  <p>
                    <svg class="bulb" viewBox="0 0 12 16" aria-hidden="true">
                      <path d="M6 .8A4.800 4.800 0 0 0 2.600 9L4 11.500H8L9.400 9A4.800 4.800 0 0 0 6 .8Z" fill="#f2c35c" stroke="#2a2314"></path>
                      <path d="M4 11.500H8V14L6 15.500L4 14Z" fill="#b9bcc0" stroke="#1b1b1b"></path>
                    </svg>
                    Map Controls:
                  </p>
                  <ul>
                    <li>• Drag to pan around the map</li>
                    <li>• Scroll to zoom in/out</li>
                    <li>• Click on shards to view details</li>
                  </ul>
                </div>
              </div>
            </section>
            <section class="card quick">
              <h2>Quick Actions</h2>
              <button class="action primary" type="button">${icon("add")}Deposit to MeshPay</button>
              <button class="action" type="button">${icon("send")}Send Payment</button>
              <button class="action" type="button">${icon("wallet")}Transaction History</button>
            </section>
          </div>
        </main>
      </div>
      <div class="thumb"></div>
    `;
  }
}
